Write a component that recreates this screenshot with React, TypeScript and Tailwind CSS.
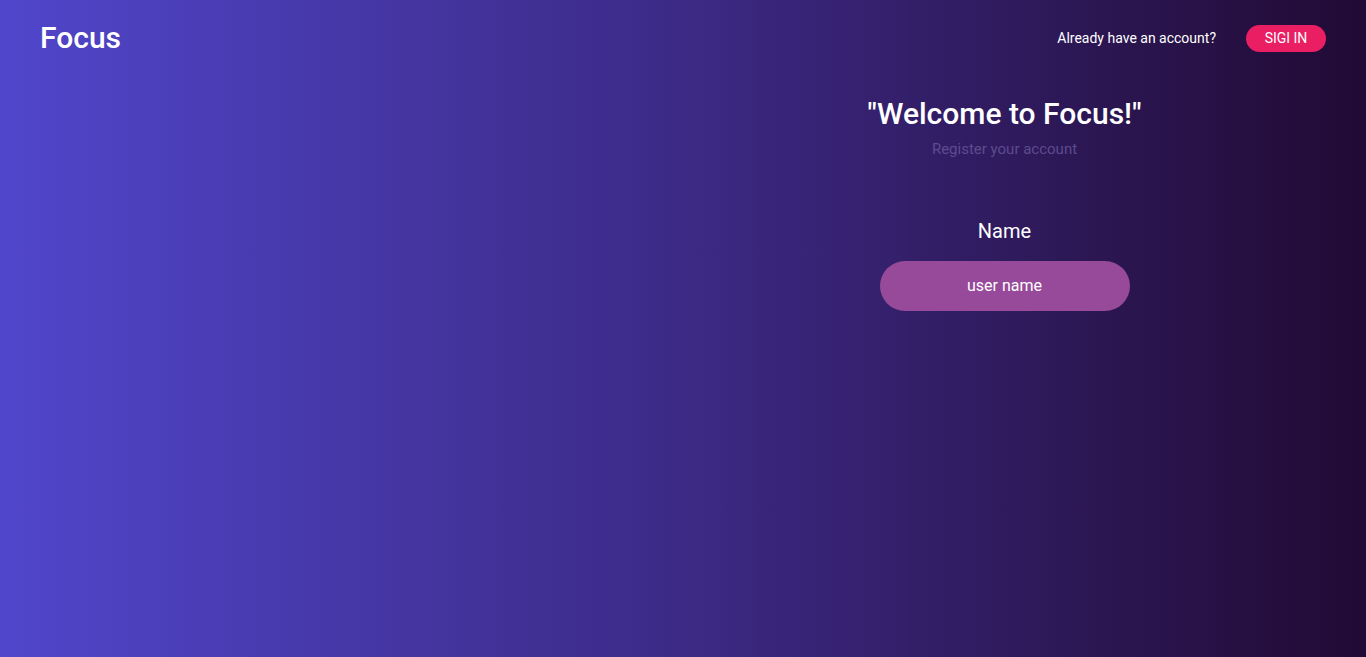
export default function App() {
  return (
    <div
      className="w-full h-[657px] overflow-hidden bg-gradient-to-r from-[#5046cb] via-[#3c2a86] to-[#210a34] text-white"
      style={{ fontFamily: "Roboto, 'Liberation Sans', sans-serif" }}
    >
      <header className="flex items-center justify-between px-10 pt-[22px]">
        <h1 className="text-[30px] font-medium leading-8">Focus</h1>
        <div className="flex items-center gap-[30px]">
          <span className="text-sm">Already have an account?</span>
          <button className="h-[27px] w-20 rounded-full bg-[#e91e63] text-sm uppercase">
            Sigi in
          </button>
        </div>
      </header>

      <main className="grid grid-cols-2 px-10">
        <div />
        <div className="flex flex-col items-center">
          <h2 className="mt-[42px] text-[30px] font-medium leading-9">
            "Welcome to Focus!"
          </h2>
          <p className="mt-[6px] text-[15px] text-[#5d4b8e]">Register your account</p>
          <label className="mt-14 text-xl">Name</label>
          <input
            placeholder="user name"
            className="mt-4 h-[50px] w-[250px] rounded-full bg-[#974a9a] text-center text-base text-white placeholder:text-white outline-none"
          />
        </div>
      </main>
    </div>
  );
}
